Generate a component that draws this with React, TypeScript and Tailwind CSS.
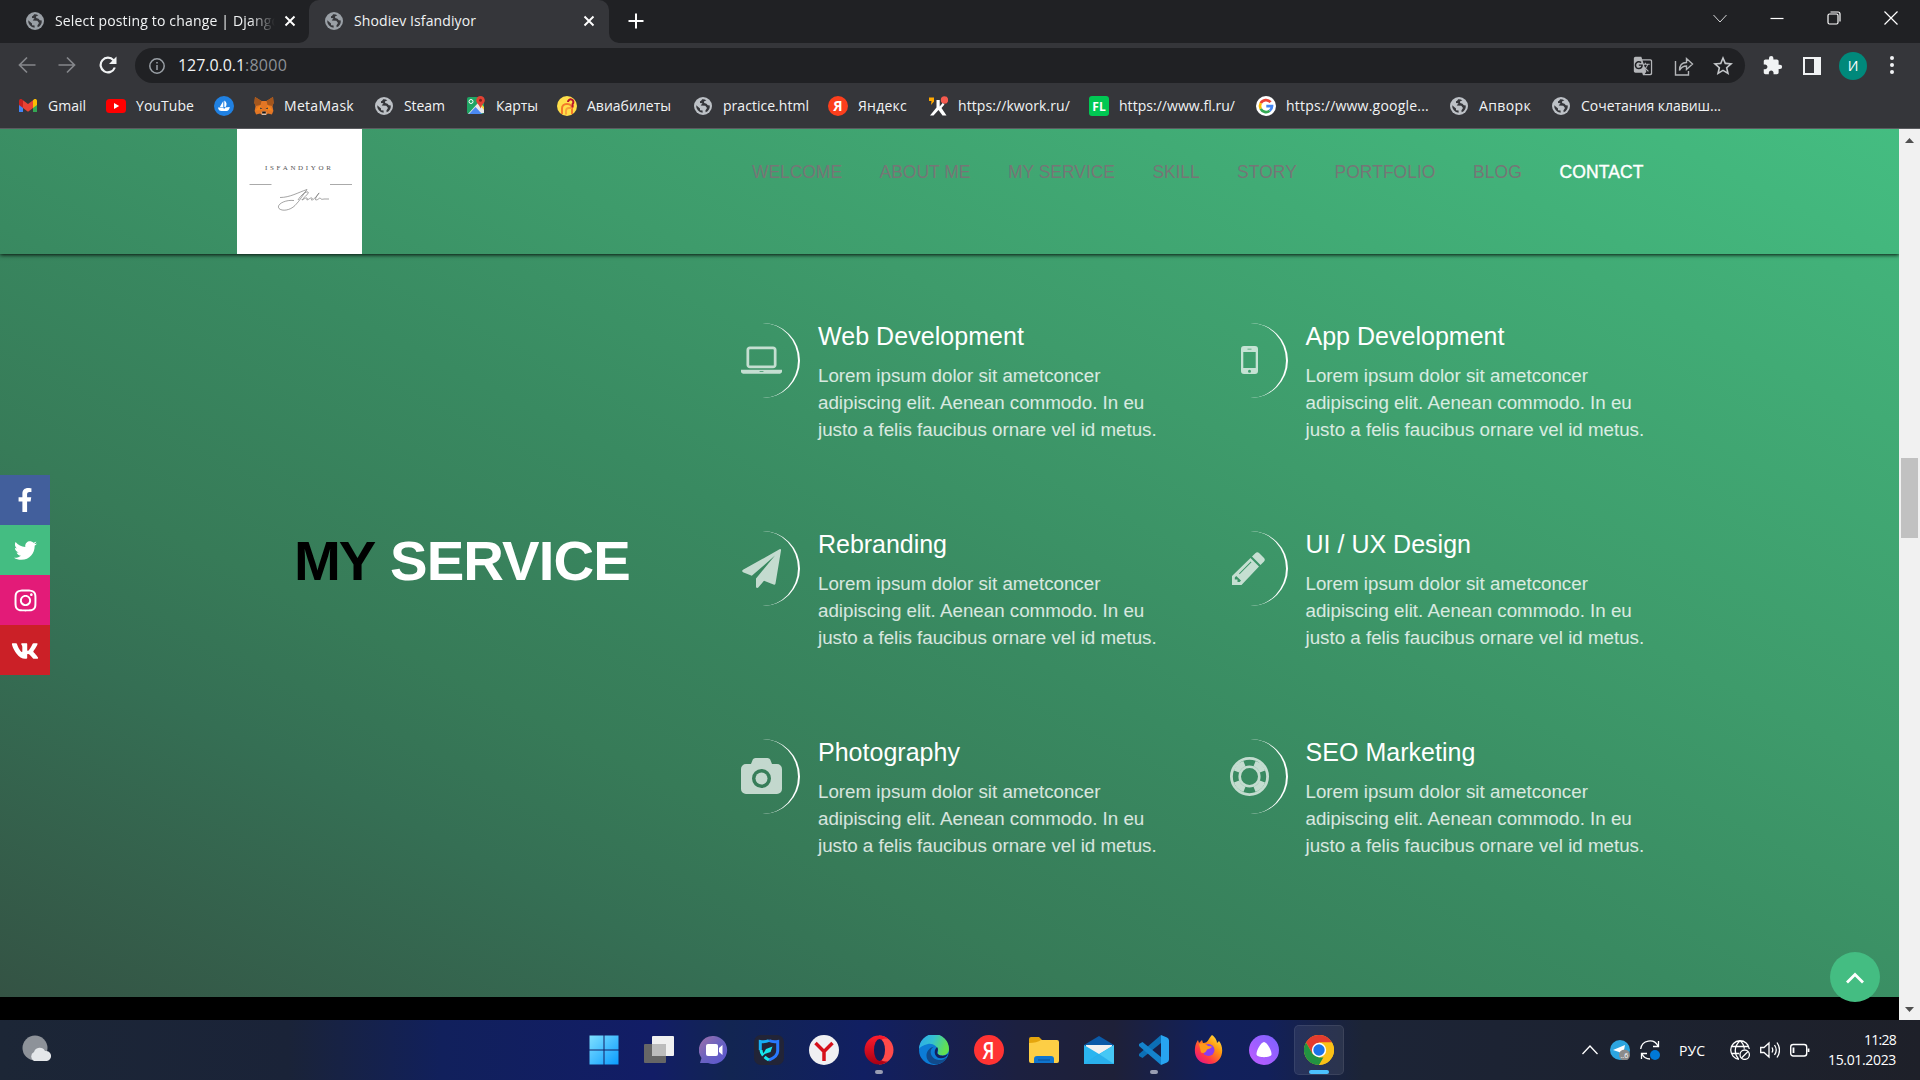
import { useLayoutEffect, useRef, useState } from "react";
import type { ReactNode } from "react";
import { FaFacebookF, FaTwitter, FaInstagram, FaVk } from "react-icons/fa";
import { MdExtension, MdOutlineStarBorder, MdGTranslate } from "react-icons/md";

const SANS = "font-['Liberation_Sans',Arial,sans-serif]";

/* Text whose tracking is adjusted so that it fills the given width. */
function Fit({ w, className = "", children }: { w: number; className?: string; children: string }) {
  const ref = useRef<HTMLSpanElement>(null);
  const [spacing, setSpacing] = useState(0);
  useLayoutEffect(() => {
    if (ref.current) {
      const natural = ref.current.getBoundingClientRect().width;
      setSpacing((w - natural) / children.length);
    }
  }, [w, children]);
  return (
    <span ref={ref} className={`inline-block whitespace-nowrap ${className}`} style={{ letterSpacing: `${spacing}px` }}>
      {children}
    </span>
  );
}

function Globe({ color = "#bdc1c6" }: { color?: string }) {
  return (
    <svg viewBox="0 0 18 18" className="size-[18px] shrink-0">
      <circle cx="9" cy="9" r="9" fill={color} />
      <path d="M2.2 8.2 6 11.6v1.6l2.6.3v2.3A7 7 0 0 1 2.2 8.2Z" fill="#35363a" />
      <path d="M8.2 2.2c-1 1-.6 1.7-2.2 2L6 6l2.5.2L6.700 8.500l4.600.300 1.700 2.200-1.600 2.600.3 1.700A7 7 0 0 0 15.800 8.500l-2-.3-1.300-1.500-2.300-.6L10 4.500l2.400-1.300A7 7 0 0 0 8.200 2.200Z" fill="#35363a" />
    </svg>
  );
}

function GmailIcon() {
  return (
    <svg viewBox="0 0 20 20" className="size-5">
      <path d="M1 5v11h4V8.500Z" fill="#4285f4" />
      <path d="M19 5v11h-4V8.500Z" fill="#34a853" />
      <path d="M1 9V5c0-2 2-2.500 3.200-1.500L5 4.200V12Z" fill="#c5221f" />
      <path d="M19 9V5c0-2-2-2.500-3.200-1.500L15 4.200V12Z" fill="#fbbc04" />
      <path d="m5 4.200 5 3.900 5-3.900v7.800l-5 3.800-5-3.800Z" fill="#ea4335" />
    </svg>
  );
}

function YoutubeIcon() {
  return (
    <svg viewBox="0 0 20 20" className="size-5">
      <rect y="3" width="20" height="14" rx="3.500" fill="#f00" />
      <path d="m8 7 5.200 3L8 13Z" fill="#fff" />
    </svg>
  );
}

function OpenSeaIcon() {
  return (
    <svg viewBox="0 0 20 20" className="size-5">
      <circle cx="10" cy="10" r="10" fill="#2081e2" />
      <path d="M9.300 5v6H5.800ZM10.300 4.500c2.500 1.500 3 4.500 1.300 6.500h-1.300Z" fill="#fff" />
      <path d="M4 11.500h5.500v1H11v-1l4.800-.5c-.5 2.500-1.600 4-3.300 4H7.500C5.500 15 4.300 14 4 11.500Z" fill="#fff" />
    </svg>
  );
}

function FoxIcon() {
  return (
    <svg viewBox="0 0 20 20" className="size-5">
      <path d="m1 1 6.500 4h5L19 1l.6 6-1.200 3 1 5-1.500 3.500-4-1L12 19H8l-1.900-1.500-4 1L.6 15l1-5L.4 7Z" fill="#e27625" />
      <path d="m1 1 6.500 4-1 4L1.600 10 .4 7ZM19 1l-6.500 4 1 4 4.900 1 1.200-3Z" fill="#a3561d" />
      <path d="m6.500 9 1.500 5-6.500.5L4 11ZM13.500 9 12 14l6.500.5L16 11Z" fill="#f6851b" />
      <path d="m6 11.500 2.400 1-2.100.8ZM14 11.500l-2.400 1 2.100.8Z" fill="#233447" />
      <path d="m7.500 16.500 1-1h3l1 1L12 19H8Z" fill="#d7c1b3" />
      <path d="M8.300 15.500h3.400l.2 2H8.100Z" fill="#161616" />
    </svg>
  );
}

function MapsIcon() {
  return (
    <svg viewBox="0 0 20 20" className="size-5">
      <rect x="1" y="1" width="17" height="17" rx="2" fill="#1fa463" />
      <path d="M2 18 12 7l6 6v4Z" fill="#e8e8e8" />
      <path d="m3 18 6.500-7 6.500 7Z" fill="#4a89f3" />
      <path d="m12 7 1.500-1L18 11v3Z" fill="#fdd23e" />
      <path d="M14.500 0a4.300 4.300 0 0 1 4.300 4.300c0 3-3 4-4.300 8.200-1.300-4.200-4.300-5.200-4.300-8.200A4.300 4.300 0 0 1 14.500 0Z" fill="#e34133" />
      <circle cx="14.500" cy="4.300" r="1.500" fill="#7a231e" />
      <circle cx="5" cy="5.500" r="2" fill="none" stroke="#fff" />
    </svg>
  );
}

function AviaIcon() {
  return (
    <svg viewBox="0 0 20 20" className="size-5">
      <circle cx="10" cy="10" r="10" fill="#ffdf4a" />
      <path d="M5 18v-5.500a4.500 4.500 0 0 1 4.500-4.500h1a4.500 4.500 0 0 1 4.500 4.500V18" fill="none" stroke="#f47a2a" strokeWidth="2" />
      <path d="M9 18.500V15a3 3 0 0 1 3-3h3" fill="none" stroke="#f8a13a" strokeWidth="1.800" />
      <path d="M11 6a2.700 2.700 0 1 1 4.600 2v3.500" fill="none" stroke="#b5132f" strokeWidth="2" />
    </svg>
  );
}

function LetterIcon({ bg, children, round }: { bg: string; children: string; round?: boolean }) {
  return (
    <svg viewBox="0 0 20 20" className="size-5 overflow-visible">
      <rect width="20" height="20" rx={round ? 10 : 3} fill={bg} />
      <text x="10" y="15" textAnchor="middle" fill="#fff" fontFamily="Open Sans, sans-serif" fontWeight="700" fontSize={round ? 14 : 12}>
        {children}
      </text>
    </svg>
  );
}

function KworkIcon() {
  return (
    <svg viewBox="0 0 20 20" className="size-5">
      <path d="M1 1.500h5v4L3 9 3.500 5H1Z" fill="#ffa800" />
      <circle cx="16.500" cy="4" r="3.700" fill="#f55a4e" />
      <path d="M8.500 4h3.200v6.500l3-3.500 1.800 1.500-3 3.500 5 7.500h-4L10.500 14 5.500 19.500H2l6.500-8Z" fill="#fff" />
    </svg>
  );
}

function GoogleIcon() {
  return (
    <svg viewBox="0 0 20 20" className="size-5">
      <circle cx="10" cy="10" r="10" fill="#fff" />
      <g fill="none" strokeWidth="2.700">
        <path d="M14.600 6.200A6 6 0 0 0 4.700 7.200" stroke="#ea4335" />
        <path d="M4.700 7.200a6 6 0 0 0 0 5.600" stroke="#fbbc04" />
        <path d="M4.700 12.800a6 6 0 0 0 9 2" stroke="#34a853" />
        <path d="M13.700 14.800A6 6 0 0 0 16 10.200h-5.700" stroke="#4285f4" />
      </g>
    </svg>
  );
}

const bookmarks: { slot: string; icon: ReactNode; text?: string; w?: number }[] = [
  { slot: "w-[88px]", icon: <GmailIcon />, text: "Gmail", w: 38 },
  { slot: "w-[108px]", icon: <YoutubeIcon />, text: "YouTube", w: 58 },
  { slot: "w-[40px]", icon: <OpenSeaIcon /> },
  { slot: "w-[120px]", icon: <FoxIcon />, text: "MetaMask", w: 70 },
  { slot: "w-[92px]", icon: <Globe />, text: "Steam", w: 41 },
  { slot: "w-[91px]", icon: <MapsIcon />, text: "Карты", w: 42 },
  { slot: "w-[136px]", icon: <AviaIcon />, text: "Авиабилеты", w: 84 },
  { slot: "w-[135px]", icon: <Globe />, text: "practice.html", w: 86 },
  { slot: "w-[100px]", icon: <LetterIcon bg="#fc3f1d" round>Я</LetterIcon>, text: "Яндекс", w: 49 },
  { slot: "w-[161px]", icon: <KworkIcon />, text: "https://kwork.ru/", w: 112 },
  { slot: "w-[167px]", icon: <LetterIcon bg="#00c853">FL</LetterIcon>, text: "https://www.fl.ru/", w: 116 },
  { slot: "w-[193px]", icon: <GoogleIcon />, text: "https://www.google...", w: 143 },
  { slot: "w-[102px]", icon: <Globe />, text: "Апворк", w: 52 },
  { slot: "w-[200px]", icon: <Globe />, text: "Сочетания клавиш...", w: 140 },
];

function TabClose() {
  return (
    <svg viewBox="0 0 12 12" className="size-3 shrink-0" stroke="#fff" strokeWidth="1.900">
      <path d="m1.500 1.500 9 9M10.500 1.500l-9 9" />
    </svg>
  );
}

function Browser() {
  return (
    <div className="h-[129px] shrink-0 border-b border-[#5b5c60] bg-[#35363a] font-['Open_Sans','Noto_Sans',sans-serif] text-[14px] text-[#f1f3f4]">
      <div className="flex h-[43px] items-end bg-[#202124]">
        <div className="flex h-[43px] w-[309px] items-center rounded-br-[10px] pl-[26px] pb-[1px]">
          <Globe color="#9aa0a6" />
          <div className="mb-[2px] ml-[11px] w-[226px] [mask-image:linear-gradient(to_right,#000_195px,transparent_220px)]">
            <Fit w={225}>Select posting to change | Django</Fit>
          </div>
          <div className="ml-[3px]"><TabClose /></div>
        </div>
        <div className="relative flex h-[43px] w-[300px] items-center rounded-t-[10px] bg-[#35363a] pl-4 pb-[1px]">
          <svg viewBox="0 0 10 10" className="absolute bottom-0 -left-[10px] size-[10px]"><path d="M10 0v10H0A10 10 0 0 0 10 0Z" fill="#35363a" /></svg>
          <svg viewBox="0 0 10 10" className="absolute bottom-0 -right-[10px] size-[10px]"><path d="M0 0v10h10A10 10 0 0 1 0 0Z" fill="#35363a" /></svg>
          <Globe color="#9aa0a6" />
          <div className="mb-[2px] ml-[11px] w-[229px]"><Fit w={122}>Shodiev Isfandiyor</Fit></div>
          <TabClose />
        </div>
        <svg viewBox="0 0 16 16" className="mb-[14px] ml-[19px] size-4" stroke="#fff" strokeWidth="2"><path d="M8 .5v15M.5 8h15" /></svg>
        <div className="ml-auto flex h-[43px] w-[207px] items-center gap-[43px] pb-[7px]">
          <svg viewBox="0 0 14 14" className="size-[14px] shrink-0" fill="none" stroke="#d5d6d8" strokeWidth="1"><path d="m.5 4 6.500 7 6.500-7" /></svg>
          <svg viewBox="0 0 14 14" className="size-[14px] shrink-0" stroke="#fff" strokeWidth="1.200"><path d="M.5 7.500h13" /></svg>
          <svg viewBox="0 0 14 14" className="size-[14px] shrink-0" fill="none" stroke="#fff" strokeWidth="1.200"><rect x="1" y="3" width="10" height="10" rx="1.500" /><path d="M3.500 1H11a2 2 0 0 1 2 2v7.500" /></svg>
          <svg viewBox="0 0 14 14" className="size-[14px] shrink-0" stroke="#fff" strokeWidth="1.200"><path d="m.5.5 13 13M13.500.5l-13 13" /></svg>
        </div>
      </div>
      <div className="flex h-[45px] items-center">
        <svg viewBox="0 0 18 18" className="mb-[1px] ml-[18px] size-[18px]" fill="none" stroke="#85878b" strokeWidth="1.700"><path d="M17.500 9H2M9 1.500 1.500 9 9 16.500" /></svg>
        <svg viewBox="0 0 18 18" className="mb-[1px] ml-[22px] size-[18px]" fill="none" stroke="#85878b" strokeWidth="1.700"><path d="M.5 9H16M9 1.500 16.500 9 9 16.500" /></svg>
        <svg viewBox="0 0 18 18" className="mb-[1px] ml-[23px] size-[18px]" fill="none" stroke="#f1f3f4" strokeWidth="2.200"><path d="M15.800 11.500A7.300 7.300 0 1 1 14.500 4.300" /><path d="M17.500.5v7.500H10Z" fill="#f1f3f4" stroke="none" /></svg>
        <div className="ml-[18px] flex h-[35px] w-[1610px] items-center rounded-full bg-[#202124] pl-[14px] text-[16px]">
          <svg viewBox="0 0 16 16" className="size-4" fill="none" stroke="#9aa0a6" strokeWidth="1.500"><circle cx="8" cy="8" r="7.200" /><path d="M8 7v5M8 4v1.600" /></svg>
          <Fit w={67} className="mb-[2px] ml-[13px]">127.0.0.1</Fit>
          <Fit w={42} className="mb-[2px] text-[#8d9196]">:8000</Fit>
          <MdGTranslate className="ml-auto size-[20px] text-[#b4b6b9]" />
          <svg viewBox="0 0 20 20" className="ml-[21px] size-5" fill="none" stroke="#b4b6b9" strokeWidth="1.400"><path d="M1.500 5v14h13v-4" /><path d="M5.500 14.500C5.500 9 8 6.500 12.500 6.500v-4L18.500 8l-6 5.500v-3.500C9 10 7 11.500 5.500 14.500Z" /></svg>
          <MdOutlineStarBorder className="ml-[17px] mr-[10px] size-[24px] text-[#c4c7ca]" />
        </div>
        <MdExtension className="ml-[17px] size-[21px] text-[#f1f3f4]" />
        <div className="ml-[20px] h-[18px] w-[18px] border-2 border-r-[7px] border-[#f1f3f4]" />
        <div className="ml-[18px] flex size-7 items-center justify-center rounded-full bg-[#00897b] text-[14px] text-white">И</div>
        <div className="ml-[23px] flex flex-col gap-[3px] pb-[1px]">
          <i className="size-[4px] rounded-full bg-[#f1f3f4]" />
          <i className="size-[4px] rounded-full bg-[#f1f3f4]" />
          <i className="size-[4px] rounded-full bg-[#f1f3f4]" />
        </div>
      </div>
      <div className="flex h-[36px] items-center pl-[18px]">
        {bookmarks.map((b, i) => (
          <div key={i} className={`flex shrink-0 items-center ${b.slot}`}>
            <span className="mr-[10px] flex size-5 shrink-0 items-center justify-center">{b.icon}</span>
            {b.text && <Fit w={b.w!} className="mb-[2px]">{b.text}</Fit>}
          </div>
        ))}
      </div>
    </div>
  );
}

const nav = [
  ["WELCOME", 90], ["ABOUT ME", 91], ["MY SERVICE", 107], ["SKILL", 47], ["STORY", 60], ["PORTFOLIO", 101], ["BLOG", 49],
] as const;

function Logo() {
  return (
    <div className="size-[125px] bg-white">
      <svg viewBox="0 0 125 125" className="size-[125px]">
        <text x="28" y="41" textLength="66" fontFamily="Liberation Serif, serif" fontSize="7" fill="#555">ISFANDIYOR</text>
        <path d="M12.500 55.500h22M93 55.500h22" stroke="#aaa" />
        <g fill="none" stroke="#666" strokeWidth=".6">
          <path d="M43 68.500c10 0 18-5 27-8-4 5-7 11-12 16-5 5-13 6-16 3-3-4 6-9 15-8" />
          <path d="M61 71c3-5 8-9 10-8s-7 8-6 8 4-3 5-2-1 2 0 2 4-3 5-2-2 2 0 2 8-8 7-7-5 7-3 7 3-2 4-2 0 2 4 1h5" />
        </g>
      </svg>
    </div>
  );
}

function Header() {
  return (
    <header className="relative z-10 flex h-[125px] shrink-0 bg-[linear-gradient(to_top_right,#345344,#356f54_20%,#377b58_29%,#398a61_45%,#3e9b6b_62%,#41ab75_80%,#44bd81)] bg-[length:100%_950px] bg-top bg-no-repeat pl-[237px] shadow-[0_1px_4px_rgba(0,0,0,0.9)]">
      <Logo />
      <nav className="ml-[390px] flex gap-[37.500px] pt-[33px] text-[17.5px] leading-5 text-[#767676]">
        {nav.map(([t, w]) => <Fit key={t} w={w}>{t}</Fit>)}
        <Fit w={84} className="text-white [-webkit-text-stroke:0.4px_white]">CONTACT</Fit>
      </nav>
    </header>
  );
}

function Laptop() {
  return (
    <svg viewBox="0 0 1920 1792" className="w-[41px]" fill="currentColor">
      <path d="M416 1280q-66 0-113-47t-47-113v-704q0-66 47-113t113-47h1088q66 0 113 47t47 113v704q0 66-47 113t-113 47h-1088zM384 416v704q0 13 9.500 22.500t22.500 9.500h1088q13 0 22.500-9.500t9.500-22.500v-704q0-13-9.500-22.500t-22.500-9.500h-1088q-13 0-22.500 9.500t-9.500 22.500zM1760 1344h160v96q0 40-47 68t-113 28h-1600q-66 0-113-28t-47-68v-96h1760zM1040 1440q16 0 16-16t-16-16h-160q-16 0-16 16t16 16h160z" />
    </svg>
  );
}
function Mobile() {
  return (
    <svg viewBox="0 0 17 28" className="mt-[-1px] h-7" fill="currentColor">
      <path fillRule="evenodd" d="M3 0h11a3 3 0 0 1 3 3v22a3 3 0 0 1-3 3H3a3 3 0 0 1-3-3V3a3 3 0 0 1 3-3ZM2.300 6v16h12.400V6ZM6.500 2.800v.8h4v-.8ZM8.500 23.700a1.500 1.500 0 1 0 0 3 1.500 1.500 0 0 0 0-3Z" />
    </svg>
  );
}
function Plane() {
  return (
    <svg viewBox="0 0 39 39" className="size-[39px]" fill="currentColor">
      <path d="M37.500.3Q39.200-.5 39 1.500L33.500 34.500q-.4 1.600-2 1.100L22 31.700l-5.500 6.500q-1.300 1.400-2.500 0V29.500L33 6.500 9.800 26.800 1 23.200q-1.800-1 0-2.400Z" />
    </svg>
  );
}
function Pencil() {
  return (
    <svg viewBox="0 0 33 33" className="mr-[1px] size-[33px]" fill="currentColor">
      <path fillRule="evenodd" d="M18.500 6 27 14.500 9.500 33H0v-9ZM4.200 24 2.800 25.500v2h2.700V30h2.200l1.300-1.400ZM18.800 9.500 7 21.500l.6.700L19.500 10.200Z" />
      <path d="m20 4.500 3.300-3.300q2-2 4 0l4.500 4.500q2 2 0 4L28.500 13Z" />
    </svg>
  );
}
function Camera() {
  return (
    <svg viewBox="0 0 41 36" className="mb-[2px] w-[41px]" fill="currentColor">
      <path fillRule="evenodd" d="M14.500 0h12q2 0 2.700 1.600L31 6h5a5 5 0 0 1 5 5v20a5 5 0 0 1-5 5H5a5 5 0 0 1-5-5V11a5 5 0 0 1 5-5h5l1.800-4.400Q12.500 0 14.500 0ZM20.500 11a9.500 9.500 0 1 0 0 19 9.500 9.500 0 0 0 0-19Z" />
      <circle cx="20.500" cy="20.500" r="6" />
    </svg>
  );
}
function LifeRing() {
  return (
    <svg viewBox="0 0 39 39" className="size-[39px]" fill="none" stroke="currentColor">
      <circle cx="19.500" cy="19.500" r="18.100" strokeWidth="2.800" />
      <circle cx="19.500" cy="19.500" r="9.800" strokeWidth="2.600" />
      <circle cx="19.500" cy="19.500" r="13.900" strokeWidth="5.700" pathLength="8" strokeDasharray="1.050 .950" strokeDashoffset="-.475" />
    </svg>
  );
}

const services = [
  { title: "Web Development", w: 206, icon: <Laptop /> },
  { title: "App Development", w: 199, icon: <Mobile /> },
  { title: "Rebranding", w: 129, icon: <Plane /> },
  { title: "UI / UX Design", w: 165.5, icon: <Pencil /> },
  { title: "Photography", w: 142, icon: <Camera /> },
  { title: "SEO Marketing", w: 170, icon: <LifeRing /> },
];

function Service({ title, w, icon }: { title: string; w: number; icon: ReactNode }) {
  return (
    <article className="flex">
      <div className="flex size-[75px] shrink-0 items-center justify-center rounded-full border-r-[2.500px] border-r-white text-white/70">
        {icon}
      </div>
      <div className="ml-[18px] w-[360px]">
        <h3 className="text-[25px] leading-[27.5px] text-white"><Fit w={w}>{title}</Fit></h3>
        <p className="mt-[12.500px] text-[18.750px] leading-[26.790px] text-white/80">
          Lorem ipsum dolor sit ametconcer<br />adipiscing elit. Aenean commodo. In eu<br />justo a felis faucibus ornare vel id metus.
        </p>
      </div>
    </article>
  );
}

function Page() {
  return (
    <div className={`relative flex h-[891px] w-[1899px] flex-col overflow-hidden ${SANS}`}>
      <Header />
      <section className="flex h-[743px] shrink-0 bg-[linear-gradient(to_top_right,#345344,#356f54_20%,#377b58_29%,#398a61_45%,#3e9b6b_62%,#41ab75_80%,#44bd81)] bg-[length:100%_950px] bg-bottom bg-no-repeat pl-[294px] pt-[69px]">
        <h2 className="mt-[210px] w-[431px] text-[56.250px] leading-[56px] font-bold text-white">
          <Fit w={80} className="text-black">MY</Fit>
          <Fit w={240} className="ml-[16px]">SERVICE</Fit>
        </h2>
        <div className="grid h-[624px] grid-cols-[487.500px_487.500px] grid-rows-3">
          {services.map((s) => <Service key={s.title} {...s} />)}
        </div>
      </section>
      <div className="h-[23px] bg-black" />
      <aside className="absolute top-[346px] left-0 z-20 flex w-[50px] flex-col text-white">
        <a className="flex h-[50px] items-center justify-center bg-[#425f9c] pb-[1px]"><FaFacebookF className="size-6" /></a>
        <a className="flex h-[50px] items-center justify-center bg-[#44bd82]"><FaTwitter className="size-[23px]" /></a>
        <a className="flex h-[50px] items-center justify-center bg-[#e31b78]"><FaInstagram className="size-[25px]" /></a>
        <a className="flex h-[50px] items-center justify-center bg-[#cb2027] pt-[1px]"><FaVk className="size-[28px]" /></a>
      </aside>
      <button className="absolute top-[823px] left-[1830px] z-20 flex size-[50px] items-center justify-center rounded-full bg-[#44bd82]">
        <svg viewBox="0 0 18 12" className="mt-[1px] w-[18px]" fill="none" stroke="#fff" strokeWidth="2.800"><path d="m1 10.500 8-8 8 8" /></svg>
      </button>
    </div>
  );
}

function Scrollbar() {
  return (
    <div className="flex w-[21px] flex-col items-center bg-[#f1f1f1]">
      <svg viewBox="0 0 9 5" className="mt-[9px] w-[9px]"><path d="M0 5 4.500 0 9 5Z" fill="#505050" /></svg>
      <div className="mt-[315px] h-[80px] w-[17px] bg-[#c1c1c1]" />
      <svg viewBox="0 0 9 5" className="mt-auto mb-[8px] w-[9px]"><path d="M0 0 4.500 5 9 0Z" fill="#505050" /></svg>
    </div>
  );
}

const apps: ReactNode[] = [
  <svg key="win" viewBox="0 0 30 30" className="size-[30px]">
    <defs><linearGradient id="win" x1="0" y1="0" x2="1" y2="1"><stop stopColor="#7fe0ff" /><stop offset="1" stopColor="#0a9bff" /></linearGradient></defs>
    <path d="M.5.500h14v14H.5ZM15.500.500h14v14h-14ZM.5 15.500h14v14H.5ZM15.500 15.500h14v14h-14Z" fill="url(#win)" />
  </svg>,
  <svg key="task" viewBox="0 0 30 30" className="size-[30px]">
    <rect y="9" width="22" height="19" rx="1" fill="#666" /><rect x="8" y="1" width="22" height="20" rx="1" fill="#f0f0f0" /><path d="M8 9h14v12H9q-1 0-1-1Z" fill="#bcbcbc" />
  </svg>,
  <svg key="chat" viewBox="0 0 30 30" className="size-[30px]">
    <defs><linearGradient id="chat" x1="0" y1="0" x2="1" y2="1"><stop stopColor="#a070a8" /><stop offset=".5" stopColor="#6a62c0" /><stop offset="1" stopColor="#5a55d0" /></linearGradient></defs>
    <path d="M15 1a14 14 0 1 1-6 27H1l1.500-5A14 14 0 0 1 15 1Z" fill="url(#chat)" /><rect x="7" y="9" width="12" height="12" rx="2" fill="#fff" /><path d="m20 13 3.500-3v10L20 17Z" fill="#fff" />
  </svg>,
  <svg key="shield" viewBox="0 0 30 30" className="size-[30px]">
    <rect width="30" height="30" rx="7" fill="#222437" />
    <path d="M15 5.500c3 1.500 6 1.500 8.700 1V16c0 4-3.700 7-8.700 9" fill="none" stroke="#2878ff" strokeWidth="3" />
    <path d="M15 5.500c-3 1.500-6 1.500-8.700 1V15" fill="none" stroke="#16aef5" strokeWidth="3" />
    <path d="M7 15c0 4 3 7 8 10" fill="none" stroke="#16e6ee" strokeWidth="3" strokeDasharray="6 2" />
    <path d="m8.500 20 3.500-6 6.500-2.500L16.500 17 12 18.500Z" fill="#16e6ee" />
  </svg>,
  <svg key="ybrowser" viewBox="0 0 30 30" className="size-[30px]">
    <circle cx="15" cy="15" r="15" fill="#f0f0f2" /><path d="m6.500 8 8.500 8.500L23.500 8M15 16v10" fill="none" stroke="#d6101a" strokeWidth="3.500" />
  </svg>,
  <svg key="opera" viewBox="0 0 30 30" className="size-[30px]">
    <defs><linearGradient id="opera" x1="0" y1="0" x2="0" y2="1"><stop stopColor="#ff1b2d" /><stop offset="1" stopColor="#a70014" /></linearGradient></defs>
    <path d="M15 .5a14.500 14.500 0 1 1 0 29V25c7 0 7-20 0-20Z" fill="#ff4a4a" />
    <path fillRule="evenodd" d="M15 .5c4 0 7 1.500 9 3.500-5-2-11 2-11 11s6 13 11 11c-2 2-5 3.500-9 3.500A14.500 14.500 0 0 1 15 .5Z" fill="url(#opera)" />
    <ellipse cx="15.500" cy="15" rx="5.500" ry="11" fill="#101d5c" />
  </svg>,
  <svg key="edge" viewBox="0 0 30 30" className="size-[30px]">
    <defs><linearGradient id="edge" x1="0" y1="0" x2="1" y2=".3"><stop stopColor="#2aa8ee" /><stop offset=".5" stopColor="#35c1d0" /><stop offset="1" stopColor="#62e050" /></linearGradient></defs>
    <circle cx="15" cy="15" r="15" fill="#0c7cd6" />
    <path d="M0 14A15 15 0 0 1 30 14c0 4-3 6.500-7 6.500-3 0-5.500-1-4-3C20 12 14 8 9 9c-5 1-8 3-9 5Z" fill="url(#edge)" />
    <path d="M16 11.500c-6 1-6 10.500 1.500 13 4 1.200 7 .5 10-2-3 6-9 8-15 6C4 24 7 12.500 16 11.500Z" fill="#114a8b" />
    <path d="M18 12c1.500 1.500 1 3.500.3 5-.5 2 2.200 3.700 5.200 3.700 2 0 4-.7 5.500-2-1 3-4 4.600-7 4.600-6 0-8.500-7-4-11.300Z" fill="#12215f" />
  </svg>,
  <svg key="yandex" viewBox="0 0 30 30" className="size-[30px] overflow-visible">
    <circle cx="15" cy="15" r="15" fill="#ff3333" /><text x="14.500" y="23.500" textAnchor="middle" fill="#fff" fontFamily="Open Sans, sans-serif" fontWeight="600" fontSize="24" textLength="12" lengthAdjust="spacingAndGlyphs">Я</text>
  </svg>,
  <svg key="files" viewBox="0 0 30 30" className="size-[30px]">
    <path d="M0 4q0-2 2-2h8l3 3v5H0Z" fill="#e5a50d" /><path d="M0 8q8 0 12-3h16q2 0 2 2v19q0 2-2 2H2q-2 0-2-2Z" fill="#fdce45" /><path d="M5 28v-4q0-3 3-3h14q3 0 3 3v4Z" fill="#0f75cf" /><path d="M9 25h12" stroke="#0a4e93" />
  </svg>,
  <svg key="mail" viewBox="0 0 30 30" className="size-[30px]">
    <path d="M0 10 15 1l15 9v5H0Z" fill="#0a5aa8" /><path d="M2 10h26v12H2Z" fill="#f1f1f1" /><path d="m0 10 15 9 15-9v19H0Z" fill="#2bb5f0" /><path d="M30 10 0 29h28q2 0 2-2Z" fill="#46c8f5" /><path d="m0 29 15-10 15 10Z" fill="#18a0e6" fillOpacity=".6" />
  </svg>,
  <svg key="code" viewBox="0 0 30 30" className="size-[30px]">
    <path d="m22 0 6 2.500q2 .8 2 3v19q0 2.200-2 3L22 30Z" fill="#27a4f0" /><path d="M22 0v8L3.500 23 0 21v-2Z" fill="#0c6fb5" /><path d="M0 11V9l3.500-2L22 22v8Z" fill="#1483cc" />
  </svg>,
  <svg key="fox" viewBox="0 0 30 30" className="size-[30px]">
    <defs><linearGradient id="ff" x1="1" y1="0" x2=".2" y2="1"><stop stopColor="#fff44f" /><stop offset=".4" stopColor="#ff980e" /><stop offset=".75" stopColor="#ff3647" /><stop offset="1" stopColor="#e31587" /></linearGradient></defs>
    <path d="M18 0c4 3 5 6 5 8l2-2c6 7 4 23-10 23C4 29 0 21 1 13c.3-3 1.300-6 3-8l1 3 3-3 1 3c3 0 4-1 6-4 1-2 2-3 3-4Z" fill="url(#ff)" />
    <circle cx="14.500" cy="15" r="6" fill="#8a3cf0" /><path d="M5 9c4-2 7 0 9 2l4 .5c-1 2-3 2-5 3-1 3-3 4-6 3Z" fill="#ff9a1a" />
  </svg>,
  <svg key="alice" viewBox="0 0 30 30" className="size-[30px]">
    <defs><linearGradient id="alice" x1="1" y1="0" x2="0" y2="1"><stop stopColor="#7a62ff" /><stop offset="1" stopColor="#c05cff" /></linearGradient></defs>
    <circle cx="15" cy="15" r="15" fill="url(#alice)" /><path d="M15 7c3 0 8 9 7.500 12.500C22 23 8 23 7.500 19.500 7 16 12 7 15 7Z" fill="#fff" />
  </svg>,
  <svg key="chrome" viewBox="0 0 30 30" className="size-[30px]">
    <circle cx="15" cy="15" r="15" fill="#fbc116" /><path d="M2 7.500A15 15 0 0 1 28 7.500H15L8.500 18.800Z" fill="#e33b2e" /><path d="M2 7.500 8.500 18.800 15 22.500h6.500L15 30A15 15 0 0 1 2 7.500Z" fill="#229342" /><path d="M21.500 18.800 15 30A15 15 0 0 0 28 7.500H15Z" fill="#fbc116" />
    <circle cx="15" cy="15" r="7.200" fill="#fff" /><circle cx="15" cy="15" r="5.700" fill="#1a73e8" />
  </svg>,
];

function Taskbar() {
  return (
    <footer className="flex h-[60px] shrink-0 items-center bg-[linear-gradient(to_right,#1c2636_0%,#1a2338_15%,#11205c_23%,#121d66_34%,#122552_38%,#111f62_45%,#1c2040_53%,#1e2038_58%,#11205c_63%,#12205a_66%,#1c2436_71%,#1c2230_85%,#1e2029_100%)] font-['Open_Sans','Noto_Sans',sans-serif] text-white">
      <svg viewBox="0 0 30 30" className="ml-[22px] size-[30px]">
        <circle cx="13" cy="13" r="12.500" fill="#8d9299" /><path d="M12 26a5 5 0 0 1 0-9 6 6 0 0 1 11-1 5 5 0 0 1 2 10Z" fill="#e4e7ea" />
      </svg>
      <div className="ml-[527px] flex gap-[5px]">
        {apps.map((a, i) => (
          <div key={i} className={i === 13 ? "relative flex size-[50px] items-center justify-center rounded-[5px] border border-white/8 bg-white/8" : "relative flex size-[50px] items-center justify-center"}>
            {a}
            {(i === 5 || i === 10) && <i className="absolute bottom-[1px] left-[21px] h-1 w-2 rounded-full bg-[#999db3]" />}
            {i === 13 && <i className="absolute bottom-0 left-[14px] h-1 w-5 rounded-full bg-[#4cc2ff]" />}
          </div>
        ))}
      </div>
      <svg viewBox="0 0 16 10" className="ml-auto w-4" fill="none" stroke="#fff" strokeWidth="1.300"><path d="m.5 9 7.500-8 7.500 8" /></svg>
      <svg viewBox="0 0 20 20" className="ml-[12px] size-5"><circle cx="10" cy="10" r="10" fill="#2ca5e0" /><path d="m3 10 12-5-2 10-4-3Z" fill="#fff" /><circle cx="14.500" cy="15" r="5.500" fill="#8b8b8b" /><text x="10.500" y="17.500" fontSize="7" fill="#fff" fontFamily="Open Sans, sans-serif">..6</text></svg>
      <svg viewBox="0 0 20 20" className="ml-[10px] size-5" fill="none" stroke="#fff" strokeWidth="1.300"><path d="M.7 9A9.200 9.200 0 0 1 18 6M18.500 1v5.500H13M10 19a9 9 0 0 1-8-5M1.500 19v-5.500H7" /><circle cx="15" cy="15" r="5" fill="#0078d7" stroke="none" /></svg>
      <Fit w={26} className="ml-[19px] text-[14px]">РУС</Fit>
      <svg viewBox="0 0 20 20" className="ml-[25px] size-5" fill="none" stroke="#fff" strokeWidth="1.300"><path d="M19.300 9A9.300 9.300 0 1 0 9 19.300M10 .7C4 6 4 14 8.500 19M10 .7c3 2.300 4 5 4.300 8M1.500 6.500h17M1.200 13.500h8" /><circle cx="14.700" cy="14.700" r="4.700" /><path d="m11.500 18 6.500-6.500" /></svg>
      <svg viewBox="0 0 20 20" className="ml-[10px] size-5" fill="none" stroke="#fff" strokeWidth="1.300"><path d="M.7 7.500v5H4l5 4.500V3L4 7.500ZM12 7.500q1.500 2.500 0 5M14.500 5q3.500 5 0 10M17 2.500q5 7.500 0 15" /></svg>
      <svg viewBox="0 0 20 20" className="ml-[10px] size-5" fill="none" stroke="#fff" strokeWidth="1.400"><rect x=".7" y="4.500" width="16" height="11.500" rx="2.500" /><path d="M3.500 7.500v5.500M18.500 8.500v3.500" strokeWidth="1.800" /></svg>
      <div className="mr-[24px] mb-[1px] ml-[18px] flex w-[68px] flex-col items-end text-[14px] leading-5">
        <Fit w={32}>11:28</Fit>
        <Fit w={68}>15.01.2023</Fit>
      </div>
    </footer>
  );
}

export default function App() {
  return (
    <div className="flex h-[1080px] w-[1920px] flex-col overflow-hidden">
      <Browser />
      <main className="flex h-[891px] shrink-0">
        <Page />
        <Scrollbar />
      </main>
      <Taskbar />
    </div>
  );
}
